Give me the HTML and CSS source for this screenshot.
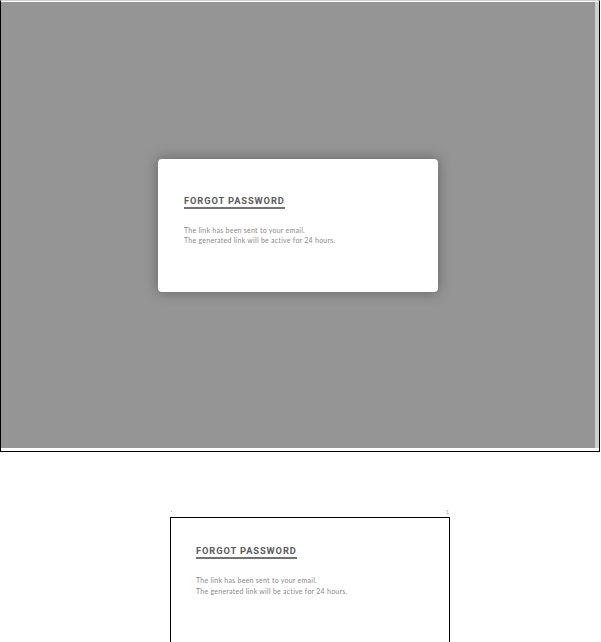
FILE: index.html
```html
<!DOCTYPE html>
<html lang="en">
<head>
  <meta charset="UTF-8" />
  <meta name="viewport" content="width=device-width, initial-scale=1.0" />
  <title>Forgot Password</title>
  <link rel="stylesheet" href="styles.css">
</head>
<body>
  <div class="screen">
    <div class="overlay">
      <div class="modal">
        <h2 class="title">FORGOT PASSWORD</h2>
        <p class="message">The link has been sent to your email.<br>The generated link will be active for 24 hours.</p>
      </div>
    </div>
  </div>

  <div class="print">
    <div class="sheet">
      <span class="mark dot"></span>
      <span class="mark page-no">1</span>
      <h2 class="title">FORGOT PASSWORD</h2>
      <p class="message">The link has been sent to your email.<br>The generated link will be active for 24 hours.</p>
    </div>
  </div>
</body>
</html>
```

FILE: styles.css
```css
body {
  margin: 0;
  background: #fff;
  font-family: Lato, "Open Sans", sans-serif;
}
.screen {
  width: 598px;
  height: 449px;
  border-left: 1px solid #000;
  border-right: 1px solid #000;
  border-top: 1px solid #d0d0d0;
  border-bottom: 1px solid #000;
  background: #fff;
  padding-bottom: 1px;
}
.overlay {
  height: 446px;
  margin-top: 1px;
  background: #959595;
  border-right: 4px solid #cfcfcf;
  display: flex;
  align-items: center;
  justify-content: center;
}
.modal {
  width: 228px;
  height: 96px;
  padding: 36px 26px 1px;
  background: #fff;
  border-radius: 4px;
  box-shadow: 0 0 14px rgba(0, 0, 0, 0.35);
}
.title {
  display: block;
  width: fit-content;
  margin: 0;
  font-family: Roboto, "Liberation Sans", sans-serif;
  font-size: 9.3px;
  font-weight: 700;
  letter-spacing: 0.9px;
  line-height: 11px;
  color: #5a5a5a;
  border-bottom: 2px solid #737373;
  padding-bottom: 1px;
}
.message {
  margin: 16px 0 0;
  font-size: 7px;
  line-height: 10.5px;
  letter-spacing: 0.25px;
  color: #8a8a8a;
}
.print {
  padding: 65px 0 0 170px;
}
.sheet {
  position: relative;
  width: 228px;
  height: 97px;
  padding: 27px 25px 0;
  border: 1px solid #000;
}
.mark {
  position: absolute;
}
.dot {
  left: 0;
  top: -7px;
  width: 1px;
  height: 1px;
  background: #bbb;
}
.page-no {
  right: 0;
  top: -9px;
  font-size: 5px;
  color: #999;
}
```
